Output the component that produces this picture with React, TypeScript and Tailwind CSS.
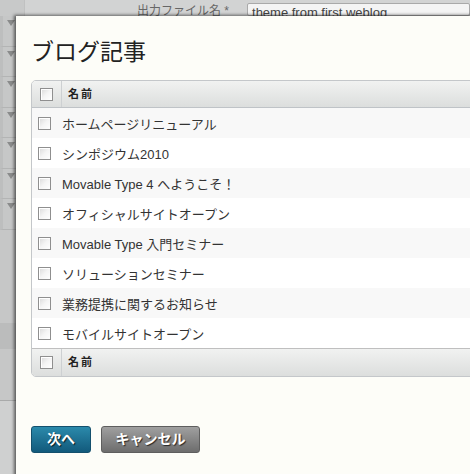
import React from "react";

const entries = [
  "ホームページリニューアル",
  "シンポジウム2010",
  "Movable Type 4 へようこそ！",
  "オフィシャルサイトオープン",
  "Movable Type 入門セミナー",
  "ソリューションセミナー",
  "業務提携に関するお知らせ",
  "モバイルサイトオープン",
];

const font = { fontFamily: '"Liberation Sans", "Noto Sans CJK JP", sans-serif' };

function Checkbox() {
  return (
    <span className="inline-block w-[13px] h-[13px] shrink-0 border border-[#8f8f8f] bg-gradient-to-br from-[#d9d9d9] via-[#f4f4f4] to-[#ffffff] shadow-[inset_1px_1px_0_#fff]" />
  );
}

function HeaderRow({ border, h }: { border: string; h: string }) {
  return (
    <div className={`flex items-stretch ${h} bg-gradient-to-b from-[#f1f2f1] to-[#dcdedd] ${border}`}>
      <div className="w-[30px] flex items-center justify-center border-r border-[#cdd0d2]">
        <Checkbox />
      </div>
      <div className="flex items-center pl-[6px] text-[11px] font-bold text-[#222] tracking-[2px]">名前</div>
    </div>
  );
}

export default function App() {
  return (
    <div className="relative w-[470px] h-[474px] overflow-hidden bg-[#cfd0d0]" style={font}>
      {/* page behind the dialog */}
      <div className="flex h-[16px] bg-[#d2d3d3]">
        <div className="w-[25px] border-r border-[#c0c1c1] bg-[#c8c9c9]" />
        <div className="w-[112px]" />
        <div className="text-[12px] leading-[16px] pt-[3px] text-[#666]">出力ファイル名 *</div>
        <div className="ml-[18px] mt-[3px] flex-1 bg-[#f4f4f4] border border-[#a9a9a9] rounded-[2px] pl-[4px] text-[13px] leading-[18px] text-[#444]">
          theme from first weblog
        </div>
      </div>
      <div className="flex flex-col w-[16px] bg-[#c6c7c7]">
        {Array.from({ length: 7 }).map((_, i) => (
          <div key={i} className="relative h-[30.5px] border-b border-[#b3b4b4] border-l-[3px] border-l-[#bdbebe]">
            <span className="absolute right-[1px] top-[4px] w-0 h-0 border-l-[4px] border-r-[4px] border-t-[6px] border-l-transparent border-r-transparent border-t-[#8a8b8b]" />
          </div>
        ))}
        <div className="h-[93px]" />
        <div className="h-[26px] bg-[#bbbcbc]" />
        <div className="h-[52px] border-b border-[#a9aaaa]" />
      </div>

      {/* dialog */}
      <div className="absolute left-[16px] top-[16px] w-[480px] h-[480px] bg-[#fdfdf8] shadow-[-2px_-1px_3px_rgba(0,0,0,0.55)] pl-[15px]">
        <h1
          className="text-[23px] leading-[28px] text-[#222] pt-[20px]"
          style={{ fontFamily: '"Noto Sans CJK JP", sans-serif' }}
        >
          ブログ記事
        </h1>
        <div className="mt-[16px] border border-[#c4c7ca] rounded-[5px] overflow-hidden bg-white">
          <HeaderRow h="h-[27px]" border="border-b border-[#bfc3c7]" />
          {entries.map((e, i) => (
            <div
              key={e}
              className={`flex items-center h-[30px] ${i % 2 === 0 ? "bg-[#f8f8f8]" : "bg-white"}`}
            >
              <div className="w-[30px] flex items-center justify-center pr-[5px] pt-[1px]">
                <Checkbox />
              </div>
              <div className="text-[13px] text-[#333] pt-[3px]">{e}</div>
            </div>
          ))}
          <HeaderRow h="h-[28px]" border="border-t border-[#bfbfbf]" />
        </div>
        <div className="flex gap-[10px] mt-[49px]">
          <button className="w-[60px] h-[27px] rounded-[3px] border border-[#14506d] bg-gradient-to-b from-[#2b8aab] to-[#125a7c] text-white font-bold text-[14px] [text-shadow:1px_1px_1px_rgba(0,0,0,0.7)]">
            次へ
          </button>
          <button className="w-[99px] h-[27px] rounded-[3px] border border-[#5e5e5e] bg-gradient-to-b from-[#a0a0a0] to-[#6d6d6d] text-white font-bold text-[14px] [text-shadow:1px_1px_1px_rgba(0,0,0,0.7)]">
            キャンセル
          </button>
        </div>
      </div>
    </div>
  );
}
